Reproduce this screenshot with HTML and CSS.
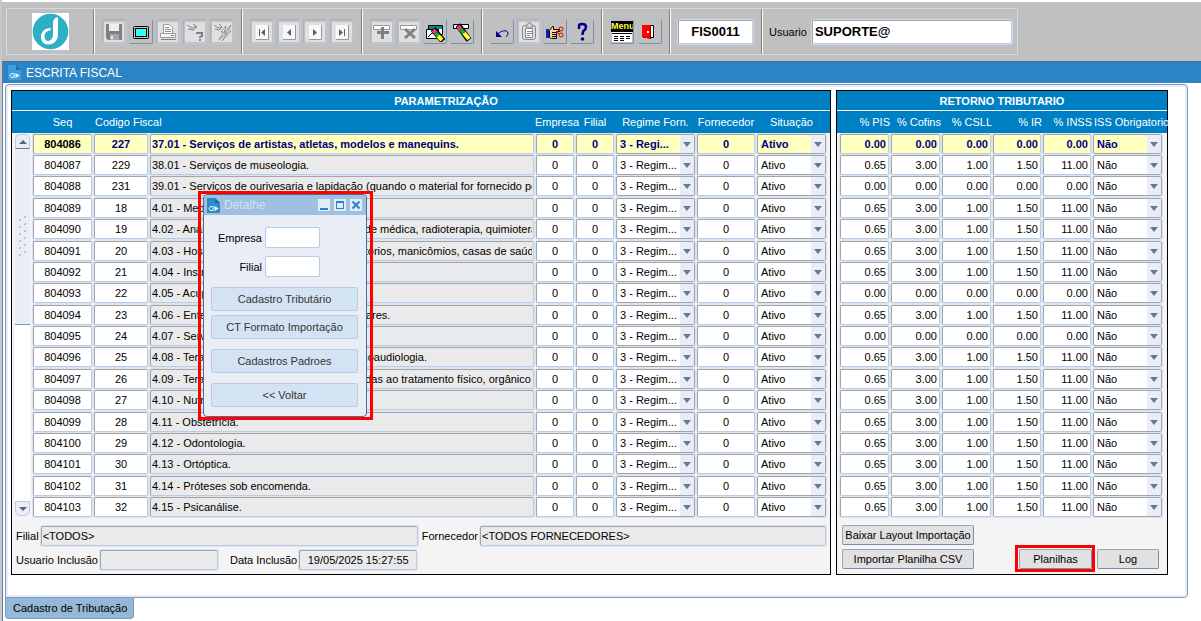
FILE: index.html
```html
<!DOCTYPE html>
<html lang="pt-BR">
<head>
    <meta charset="UTF-8">
    <title>Escrita Fiscal</title>
    <link rel="stylesheet" href="styles.css">
</head>
<body>
    <header class="topbar">
        <div class="toolbar">
            <div class="logo-box">
                <svg class="logo" viewBox="0 0 37 37">
                    <rect width="37" height="37" fill="#fff"/>
                    <circle cx="18.5" cy="18.5" r="17.8" fill="#2fafc3"/>
                    <path d="M26 4c-4 1-5 3-5 7v10c0 4-2 7-5 7-2 0-3.500-2-3.500-4.500 0-3.500 2.500-6 6-6v-2.500c-6 0-9.500 4-9.500 9 0 4.500 3 7.500 7 7.500 6 0 10-4 10-10z" fill="#fff"/>
                </svg>
            </div>
            <div class="tool-group wide">
                <button class="tool off" aria-label="Salvar"><svg viewBox="0 0 20 20"><path d="M2 2h16v16H4l-2-2z" fill="#808080"/><path d="M5 2h10v7H5z" fill="#eee"/><path d="M6 12h9v6H6z" fill="#a8a8a8"/><path d="M7 14h2v3H7z" fill="#eee"/></svg></button>
                <button class="tool" aria-label="Tela"><svg viewBox="0 0 20 20"><rect x="2.500" y="4.500" width="15" height="12" rx="1" fill="#c0c0c0" stroke="#000"/><rect x="4.500" y="6.500" width="11" height="8" fill="#3ff" stroke="#000"/></svg></button>
                <button class="tool off" aria-label="Imprimir"><svg viewBox="0 0 20 20"><path d="M5.500 2.500h6l3 3v6h-9z" fill="#fff" stroke="#999"/><path d="M7 5.500h4M7 7.500h6M7 9.500h6" stroke="#888"/><path d="M2.500 11.500h15v4h-15z" fill="#f4f4f4" stroke="#999"/><path d="M3 17.500h15M13 13.500h3" stroke="#808080"/></svg></button>
                <button class="tool off" aria-label="Consultar"><svg viewBox="0 0 20 20"><path d="M2 3l5 3 4-1-3-3M3 7l5 1 4-3-4-3M5 7l3 1" fill="none" stroke="#888"/><path d="M12 12v-1h5v3l-2 1v1M14 18h2" fill="none" stroke="#808080" stroke-width="2"/></svg></button>
                <button class="tool off" aria-label="Executar consulta"><svg viewBox="0 0 20 20"><path d="M2 3l4 3 4-1-3-3M3 7l4 1 3-3-3-3" fill="none" stroke="#888"/><path d="M14 4l-5 6h3l-5 8 7-7h-2zM19 3l-6 7h3l-6 9 9-10h-3z" fill="#fff" stroke="#909090"/></svg></button>
            </div>
            <div class="tool-group">
                <button class="tool off" aria-label="Primeiro"><svg viewBox="0 0 20 20"><path d="M4 3h12v14H4z" fill="#f8f8f8"/><path d="M16.500 3v14.500H4" fill="none" stroke="#999"/><path d="M7 7h1v7H7zM13 7v7l-4-3.500z" fill="#606060"/></svg></button>
                <button class="tool off" aria-label="Anterior"><svg viewBox="0 0 20 20"><path d="M4 3h12v14H4z" fill="#f8f8f8"/><path d="M16.500 3v14.500H4" fill="none" stroke="#999"/><path d="M12 7v7l-4-3.500z" fill="#606060"/></svg></button>
                <button class="tool off" aria-label="Próximo"><svg viewBox="0 0 20 20"><path d="M4 3h12v14H4z" fill="#f8f8f8"/><path d="M16.500 3v14.500H4" fill="none" stroke="#999"/><path d="M8 7v7l4-3.500z" fill="#606060"/></svg></button>
                <button class="tool off" aria-label="Último"><svg viewBox="0 0 20 20"><path d="M4 3h12v14H4z" fill="#f8f8f8"/><path d="M16.500 3v14.500H4" fill="none" stroke="#999"/><path d="M7 7v7l4-3.500zM12 7h1v7h-1z" fill="#606060"/></svg></button>
            </div>
            <div class="tool-group">
                <button class="tool off" aria-label="Inserir"><svg viewBox="0 0 20 20"><path d="M1.500 3.500h16v4h-16z" fill="#fff" stroke="#999"/><path d="M9 5h3v4h5v3h-5v5H9v-5H5V9h4z" fill="#808080"/></svg></button>
                <button class="tool off" aria-label="Excluir"><svg viewBox="0 0 20 20"><path d="M1.500 3.500h16v4h-16z" fill="#fff" stroke="#999"/><path d="M6 7l10 9M16 7L6 16" stroke="#808080" stroke-width="3"/></svg></button>
                <button class="tool" aria-label="Limpar bloco"><svg viewBox="0 0 20 20"><path d="M3.500 3.500h14v9h-14z" fill="#fff" stroke="#000"/><path d="M4 4h13v3H4z" fill="#088"/><path d="M1.500 7.500h12v9h-12z" fill="#fff" stroke="#000"/><path d="M3 15l4-4h4l4 4" fill="none" stroke="#000"/><path d="M8 7l10 12" stroke="#000" stroke-width="6"/><path d="M8 8l3 3" stroke="#f0308c" stroke-width="4"/><path d="M11 11l2 3" stroke="#0b2" stroke-width="4"/><path d="M13 14l4 4" stroke="#ff3" stroke-width="4"/></svg></button>
                <button class="tool" aria-label="Limpar registro"><svg viewBox="0 0 20 20"><path d="M1.500 2.500h15v4h-15z" fill="#fff" stroke="#000"/><path d="M6 3l11 15" stroke="#000" stroke-width="6"/><path d="M6 4l3 4" stroke="#f0308c" stroke-width="4"/><path d="M9 8l3 3" stroke="#0b2" stroke-width="4"/><path d="M12 11l5 6" stroke="#ff3" stroke-width="4"/></svg></button>
            </div>
            <div class="tool-group">
                <button class="tool" aria-label="Desfazer"><svg viewBox="0 0 20 20"><path d="M6 12c2-3 9-5 10-1 0 2-1 3-2 4" fill="none" stroke="#000090"/><path d="M4 9v6h6z" fill="#000090"/></svg></button>
                <button class="tool off" aria-label="Copiar"><svg viewBox="0 0 20 20"><rect x="3.500" y="3.500" width="13" height="14" rx="2" fill="#ddd" stroke="#888"/><path d="M6.500 6.500h7v9h-7z" fill="#fff" stroke="#888"/><path d="M7 5V3h2V1h3v2h2v2z" fill="#eee" stroke="#888"/><path d="M8 9.500h5M8 11.500h5M8 13.500h3" stroke="#888"/></svg></button>
                <button class="tool" aria-label="Recortar"><svg viewBox="0 0 20 20"><path d="M1 7h3v9H1z" fill="#0020d0"/><path d="M4.500 8.500l3-4h1v3h6v2h-3v7h-5l-2-1z" fill="#f5d98a" stroke="#000"/><path d="M7 10.500h5M7 12.500h4M7 14.500h4" stroke="#000"/><circle cx="16" cy="7" r="2" fill="none" stroke="#d00"/><circle cx="16" cy="13" r="2" fill="none" stroke="#d00"/><path d="M14 12l-3-3M14 8l-3 3" stroke="#d00"/></svg></button>
                <button class="tool" aria-label="Ajuda"><svg viewBox="0 0 20 20"><path d="M7 7V4q0-2 3-2 4 0 4 3 0 2-2.500 4-1 1-1 4" fill="none" stroke="#000090" stroke-width="2.500"/><circle cx="10.500" cy="17" r="1.800" fill="#000090"/></svg></button>
            </div>
            <div class="tool-group narrow">
                <button class="tool menu-tool" aria-label="Menu"><span class="menu-word">Menu</span><svg class="menu-list" viewBox="0 0 20 10"><path d="M0 0h20v10H0z" fill="#fff"/><path d="M0 1.500h20" stroke="#000"/><path d="M2 4.500h4M8 4.500h4M14 4.500h4M2 6.500h4M8 6.500h4M14 6.500h4M2 8.500h4M8 8.500h4" stroke="#000"/></svg></button>
                <button class="tool" aria-label="Sair"><svg viewBox="0 0 20 20"><path d="M3.500 3.500h10v12h-10z" fill="#fff" stroke="#000"/><path d="M2 3h8v14l-8-2z" fill="#f00"/><path d="M10.500 3v14" stroke="#800"/><path d="M7 9h2v2H7z" fill="#fff"/></svg></button>
            </div>
            <div class="code-box"><input class="code" aria-label="Programa" value="FIS0011"></div>
            <div class="user-box">
                <label for="usuario">Usuario</label>
                <input id="usuario" class="user" value="SUPORTE@">
            </div>
        </div>
    </header>

    <main class="window">
        <h1 class="window-title">
            <svg class="doc-icon" viewBox="0 0 13 15"><path d="M0 0h8l5 5v10H0z" fill="#3c9edc"/><path d="M8 0l5 5H8z" fill="#1a6cac"/><path d="M5 8.500H3.500L2 10.500l1.500 2H5M6 8v5" fill="none" stroke="#fff"/><path d="M7.500 8l4 2.500-4 2.500z" fill="#fff"/></svg>
            ESCRITA FISCAL
        </h1>
        <div class="page">
            <section class="panel left">
                <h2>PARAMETRIZAÇÃO</h2>
                <div class="grid-area">
                    <div class="scroll">
                        <div class="scroll-head"></div>
                        <button class="scroll-btn up" aria-label="Subir"></button>
                        <div class="track"><div class="thumb"><svg viewBox="0 0 9 42"><path d="M6 2l2-2M1 5l2-2M6 9l2-2M1 12l2-2M6 16l2-2M1 19l2-2M6 23l2-2M1 26l2-2M6 30l2-2M1 33l2-2M6 37l2-2M1 40l2-2" stroke="#8c9bb4"/></svg></div></div>
                        <button class="scroll-btn down" aria-label="Descer"></button>
                    </div>
                    <table class="grid">
                        <colgroup><col class="c-seq"><col class="c-cod"><col><col class="c-num"><col class="c-num"><col class="c-reg"><col class="c-forn"><col class="c-sit"></colgroup>
                        <thead>
                            <tr><th>Seq</th><th class="start">Codigo Fiscal</th><th></th><th>Empresa</th><th>Filial</th><th>Regime Forn.</th><th>Fornecedor</th><th>Situação</th></tr>
                        </thead>
                        <tbody id="params"></tbody>
                    </table>
                </div>
                <div class="form">
                    <div class="form-row">
                        <label for="filial">Filial</label>
                        <input id="filial" class="field ro grow" value="&lt;TODOS&gt;" readonly>
                        <label for="fornecedor" class="next">Fornecedor</label>
                        <input id="fornecedor" class="field ro forn" value="&lt;TODOS FORNECEDORES&gt;" readonly>
                    </div>
                    <div class="form-row">
                        <label for="usuInc">Usuario Inclusão</label>
                        <input id="usuInc" class="field ro short" readonly>
                        <label for="datInc" class="spaced">Data Inclusão</label>
                        <input id="datInc" class="field ro short mid" value="19/05/2025 15:27:55" readonly>
                    </div>
                </div>
            </section>

            <section class="panel right">
                <h2>RETORNO TRIBUTARIO</h2>
                <div class="grid-area">
                    <table class="grid taxes">
                        <colgroup><col class="c-tax"><col class="c-tax"><col class="c-tax"><col class="c-rate"><col class="c-rate"><col></colgroup>
                        <thead>
                            <tr><th>% PIS</th><th>% Cofins</th><th>% CSLL</th><th>% IR</th><th>% INSS</th><th class="start">ISS Obrigatorio</th></tr>
                        </thead>
                        <tbody id="taxes"></tbody>
                    </table>
                </div>
                <div class="actions">
                    <button class="btn big">Baixar Layout Importação</button>
                    <div class="actions-row">
                        <button class="btn big">Importar Planilha CSV</button>
                        <div class="mark"><button class="btn">Planilhas</button></div>
                        <button class="btn log">Log</button>
                    </div>
                </div>
            </section>
        </div>
        <a class="tab" href="#">Cadastro de Tributação</a>
    </main>

    <div class="dialog-mark">
        <div class="dialog" role="dialog" aria-label="Detalhe">
            <div class="dialog-title">
                <svg class="doc-icon" viewBox="0 0 13 15"><path d="M0 0h8l5 5v10H0z" fill="#2c8ccc"/><path d="M8 0l5 5H8z" fill="#1a6cac"/><path d="M5 8.500H3.500L2 10.500l1.500 2H5M6 8v5" fill="none" stroke="#fff"/><path d="M7.500 8l4 2.500-4 2.500z" fill="#fff"/></svg>
                <span>Detalhe</span>
                <button class="win-btn" aria-label="Minimizar"><svg viewBox="0 0 12 12"><path d="M2 9h8v2H2z" fill="#2c84c4"/></svg></button>
                <button class="win-btn" aria-label="Maximizar"><svg viewBox="0 0 12 12"><path d="M2 2h8v8H2zM3 4v5h6V4z" fill="#2c84c4" fill-rule="evenodd"/></svg></button>
                <button class="win-btn" aria-label="Fechar"><svg viewBox="0 0 12 12"><path d="M2.500 2.500l7 7M9.500 2.500l-7 7" stroke="#2c84c4" stroke-width="2"/></svg></button>
            </div>
            <div class="dialog-body">
                <div class="dialog-field"><label for="dEmp">Empresa</label><input id="dEmp"></div>
                <div class="dialog-field"><label for="dFil">Filial</label><input id="dFil"></div>
                <button class="soft first">Cadastro Tributário</button>
                <button class="soft">CT Formato Importação</button>
                <button class="soft apart">Cadastros Padroes</button>
                <button class="soft apart">&lt;&lt; Voltar</button>
            </div>
        </div>
    </div>

    <script src="script.js"></script>
</body>
</html>
```
FILE: styles.css
```css
:root {
    --blue: #0080c4;
    --title-blue: #2c84c4;
    --gray: #c0c0c0;
    --edge: #b9cce4;
    --shade: #a0a4ac;
    --pale: #e9eef6;
    --row-on: #ffffc0;
}

* {
    box-sizing: border-box;
}

body {
    margin: 0;
    padding-top: 2px;
    border-left: 2px solid #c8c8cc;
    background: #fff;
    color: #000;
    font: 11px/14px "Liberation Sans", Arial, sans-serif;
}

input, select, button {
    font: inherit;
    color: inherit;
    margin: 0;
    border-radius: 2px;
}

button {
    padding: 0;
}

/* barra de ferramentas */
.topbar {
    display: flex;
    padding: 6px 4px;
    background: var(--gray);
}

.toolbar {
    display: flex;
    height: 47px;
    border: 1px solid #cbdaec;
}

.toolbar > div {
    display: flex;
    align-items: center;
    justify-content: space-between;
    padding: 0 8px;
    border-right: 1px solid #808080;
    box-shadow: 1px 0 0 #fff;
}

.toolbar > div:last-child {
    border-right: 0;
    box-shadow: none;
}

.toolbar .logo-box {
    width: 87px;
    justify-content: center;
}

.logo {
    width: 37px;
    height: 37px;
}

.toolbar .tool-group {
    width: 120px;
    padding: 0 7px 0 8px;
}

.toolbar .wide { width: 148px; }
.toolbar .narrow { width: 68px; }

.tool {
    width: 24px;
    height: 25px;
    background: var(--gray);
    border: 1px solid;
    border-color: #b4bccb #7890b0 #7890b0 #b4bccb;
}

.tool svg {
    display: block;
    width: 20px;
    height: 20px;
    margin: 0 auto;
}

.tool.off {
    border-color: #a8b0bc #b9cce4 #b9cce4 #a8b0bc;
}

.tool.off svg {
    background: #e0e0e0;
}

.menu-word {
    display: block;
    height: 11px;
    font: bold 9px/11px "Liberation Sans", Arial, sans-serif;
    color: #ff3;
    background: #000;
    overflow: hidden;
}

.tool .menu-list {
    height: 10px;
}

.code, .user {
    height: 24px;
    background: #fff;
    border: 1px solid;
    border-color: var(--shade) var(--edge) var(--edge) var(--shade);
    box-shadow: 0 0 0 1px #cbd8e8;
    font-weight: bold;
}

.code {
    width: 75px;
    font-size: 13px;
    text-align: center;
}

.toolbar .user-box {
    gap: 5px;
    padding: 0 5px 0 7px;
}

.user {
    width: 200px;
    padding: 0 2px;
    font-size: 13px;
}

/* janela */
.window {
    border-left: 1px solid #5c7ca4;
    padding-bottom: 3px;
}

.window-title {
    display: flex;
    align-items: center;
    gap: 5px;
    height: 22px;
    margin: 0 0 1px;
    padding-left: 5px;
    background: var(--title-blue);
    border-top: 1px solid #3c6ea0;
    color: #fff;
    font-size: 12px;
    font-weight: normal;
}

.doc-icon {
    width: 13px;
    height: 15px;
}

.page {
    display: flex;
    gap: 5px;
    margin: 0 13px 0 2px;
    padding: 5px 19px 22px 5px;
    border: 1px solid #7c98bc;
    border-radius: 4px;
    border-bottom-left-radius: 0;
    box-shadow: inset 0 0 0 2px var(--pale);
}

.panel {
    background: #f4f4f4;
    border: 1px solid #000;
}

.left {
    flex: 1;
    min-width: 0;
}

.right {
    width: 332px;
}

.panel h2 {
    height: 20px;
    margin: 0;
    padding-left: 50px;
    background: var(--blue);
    border-bottom: 1px solid #fff;
    color: #fff;
    font: bold 11px/20px "Liberation Sans", Arial, sans-serif;
    text-align: center;
}

.right h2 {
    padding-left: 0;
}

.grid-area {
    display: flex;
    height: 407px;
    background: linear-gradient(var(--blue) 22px, transparent 22px);
}

.grid {
    flex: 1;
    width: 100%;
    min-width: 0;
    height: 407px;
    margin-right: 3px;
    table-layout: fixed;
    border-collapse: collapse;
}

.c-seq { width: 61px; }
.c-cod { width: 56px; }
.c-num { width: 40px; }
.c-reg { width: 81px; }
.c-forn { width: 60px; }
.c-sit { width: 71px; }
.c-tax { width: 51px; }
.c-rate { width: 50px; }

.grid th {
    height: 22px;
    padding: 0;
    color: #fff;
    font-weight: normal;
    white-space: nowrap;
    text-align: center;
}

.grid .start {
    text-align: left;
    padding-left: 2px;
}

.taxes th {
    text-align: right;
}

.taxes {
    margin: 0 4px 0 2px;
}

.grid td {
    padding: 0 1px;
    text-align: center;
}

.cell {
    display: block;
    width: 100%;
    height: 20px;
    padding: 0 1px;
    background: #fff;
    border: 1px solid;
    border-color: var(--shade) var(--edge) var(--edge) var(--shade);
    box-shadow: 0 0 0 1px #dbe5f1;
    text-align: center;
}

.cell.text {
    background: #eaeaea;
    text-align: left;
}

.cell.tax {
    padding-right: 2px;
    text-align: right;
}

.combo {
    display: block;
    position: relative;
}

.combo select {
    appearance: none;
    padding: 0 14px 0 3px;
    border-color: var(--shade);
    text-align: left;
}

.combo::after {
    content: "";
    position: absolute;
    top: 8px;
    right: 4px;
    border: 4px solid transparent;
    border-top: 5px solid #6c7890;
    border-bottom: 0;
}

.combo::before {
    content: "";
    position: absolute;
    top: 1px;
    right: 1px;
    bottom: 1px;
    width: 14px;
    background: var(--pale);
}

.current .cell {
    background: var(--row-on);
    color: #000080;
    font-weight: bold;
}

.current .seq {
    color: #000;
}

/* barra de rolagem */
.scroll {
    display: flex;
    flex-direction: column;
    width: 17px;
    margin: 0 1px 0 2px;
    padding-bottom: 2px;
}

.scroll-head {
    height: 23px;
}

.scroll-btn {
    height: 15px;
    width: 15px;
    margin: 0 1px;
    background: var(--pale);
    border: 1px solid var(--edge);
}

.scroll-btn::after {
    content: "";
    display: block;
    width: 0;
    margin: 0 auto;
    border: 4px solid transparent;
}

.up {
    border-radius: 5px 5px 0 0;
    border-bottom-color: #6c7890;
}

.up::after {
    border-bottom-color: #5c6478;
    border-top: 0;
}

.down {
    border-radius: 0 0 5px 5px;
}

.down::after {
    border-top-color: #5c6478;
    border-bottom: 0;
}

.track {
    flex: 1;
    margin: 0 1px;
    background: #fff;
}

.thumb {
    display: flex;
    align-items: center;
    justify-content: center;
    height: 50%;
    background: var(--pale);
    border-bottom: 1px solid #7c98bc;
}

.thumb svg {
    width: 9px;
    height: 42px;
}

/* rodape dos paineis */
.form {
    display: flex;
    flex-direction: column;
    gap: 4px;
    padding: 8px 4px 4px;
}

.form-row {
    display: flex;
    align-items: center;
    gap: 2px;
}

.field {
    height: 20px;
    padding: 0 1px;
    background: #fff;
    border: 1px solid;
    border-color: var(--shade) var(--edge) var(--edge) var(--shade);
    box-shadow: 0 0 0 1px #dbe5f1;
}

.ro { background: #eaeaea; }
.grow { flex: 1; }
.forn { width: 346px; }
.short { width: 118px; }
.mid { text-align: center; }
.next { margin-left: 2px; }
.spaced { margin-left: 10px; }

.actions {
    padding: 7px 8px 2px 5px;
}

.actions-row {
    display: flex;
    align-items: center;
}

.btn {
    height: 20px;
    background: #e1e1e1;
    border: 1px solid;
    border-color: var(--shade) #7890b0 #7890b0 var(--shade);
    white-space: nowrap;
}

.big {
    width: 132px;
}

.mark {
    margin-left: auto;
    border: 3px solid #f00;
    padding: 1px 0 0 1px;
}

.mark .btn {
    display: block;
    width: 73px;
}

.log {
    width: 62px;
    margin-left: 2px;
}

.tab {
    display: inline-block;
    margin-left: 2px;
    padding: 3px 6px 3px 7px;
    background: #94b8d8;
    border: 1px solid #7c98bc;
    border-top: 0;
    border-radius: 0 0 4px 4px;
    color: #000;
    text-decoration: none;
}

/* janela Detalhe */
.dialog-mark {
    position: absolute;
    top: 191px;
    left: 198px;
    width: 175px;
    border: 3px solid #f00;
    padding: 0 3px 0 2px;
}

.dialog {
    background: var(--pale);
    border: 1px solid #4c6c98;
    border-radius: 4px;
    overflow: hidden;
}

.dialog-title {
    display: flex;
    align-items: center;
    gap: 4px;
    height: 20px;
    padding: 0 4px 0 3px;
    background: #9fc0e0;
    color: #d3e0f0;
    font-size: 12px;
}

.dialog-title span {
    flex: 1;
}

.win-btn {
    width: 12px;
    height: 12px;
    background: #e0ecf8;
    border: 0;
    border-radius: 0;
}

.win-btn svg {
    display: block;
}

.dialog-body {
    display: flex;
    flex-direction: column;
    padding: 12px 8px 9px 7px;
}

.dialog-field {
    display: flex;
    align-items: center;
    justify-content: flex-end;
    gap: 3px;
    margin: 0 38px 8px 0;
}

.dialog-field input {
    width: 55px;
    height: 21px;
    background: #fff;
    border: 1px solid var(--edge);
}

.soft {
    height: 24px;
    margin-bottom: 4px;
    background: #d3e3f3;
    border: 1px solid var(--edge);
    color: #333;
}

.first {
    margin-top: 2px;
}

.apart {
    margin: 6px 0 4px;
}

.apart:last-child {
    margin-bottom: 0;
}
```
FILE: script.js
```js
const ROWS = [
    [804086, 227, '37.01 - Serviços de artistas, atletas, modelos e manequins.', false],
    [804087, 229, '38.01 - Serviços de museologia.', true],
    [804088, 231, '39.01 - Serviços de ourivesaria e lapidação (quando o material for fornecido pelo tomador do serviço).', false],
    [804089, 18, '4.01 - Medicina e biomedicina.', true],
    [804090, 19, '4.02 - Análises clínicas, patologia, eletricidade médica, radioterapia, quimioterapia, ultra-sonografia.', true],
    [804091, 20, '4.03 - Hospitais, clínicas, laboratórios, sanatórios, manicômios, casas de saúde, prontos-socorros.', true],
    [804092, 21, '4.04 - Instrumentação cirúrgica.', true],
    [804093, 22, '4.05 - Acupuntura.', false],
    [804094, 23, '4.06 - Enfermagem, inclusive serviços auxiliares.', true],
    [804095, 24, '4.07 - Serviços farmacêuticos.', false],
    [804096, 25, '4.08 - Terapia ocupacional, fisioterapia e fonoaudiologia.', true],
    [804097, 26, '4.09 - Terapias de qualquer espécie destinadas ao tratamento físico, orgânico e mental.', true],
    [804098, 27, '4.10 - Nutrição.', true],
    [804099, 28, '4.11 - Obstetrícia.', true],
    [804100, 29, '4.12 - Odontologia.', true],
    [804101, 30, '4.13 - Ortóptica.', true],
    [804102, 31, '4.14 - Próteses sob encomenda.', true],
    [804103, 32, '4.15 - Psicanálise.', true]
];

const field = (label, value, cls = '') =>
    `<td><input class="cell ${cls}" aria-label="${label}" value="${value}"></td>`;

const combo = (label, value) =>
    `<td><span class="combo"><select class="cell" aria-label="${label}"><option>${value}</option></select></span></td>`;

function render() {
    let params = '';
    let taxes = '';
    ROWS.forEach(([seq, code, text, taxed], i) => {
        const open = i === 0 ? '<tr class="current">' : '<tr>';
        params += open +
            field('Seq', seq, 'seq') +
            field('Codigo Fiscal', code) +
            field('Descrição', text, 'text') +
            field('Empresa', 0) +
            field('Filial', 0) +
            combo('Regime Forn.', i === 0 ? '3 - Regi...' : '3 - Regim...') +
            field('Fornecedor', 0) +
            combo('Situação', 'Ativo') + '</tr>';

        const rates = taxed ? ['0.65', '3.00', '1.00', '1.50', '11.00'] : Array(5).fill('0.00');
        const names = ['% PIS', '% Cofins', '% CSLL', '% IR', '% INSS'];
        taxes += open +
            rates.map((rate, n) => field(names[n], rate, 'tax')).join('') +
            combo('ISS Obrigatorio', 'Não') + '</tr>';
    });
    document.getElementById('params').innerHTML = params;
    document.getElementById('taxes').innerHTML = taxes;
}

render();
```
